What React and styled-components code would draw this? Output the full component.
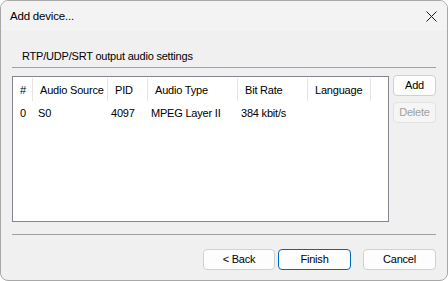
import React from 'react'
import styled, { createGlobalStyle } from 'styled-components'

const Global = createGlobalStyle`
  html, body {
    margin: 0;
    padding: 0;
    background: #ffffff;
  }
  * { box-sizing: border-box; }
`;

const Window = styled.div`
    width: 448px;
    height: 281px;
    border: 1px solid #a8a8a8;
    border-radius: 8px;
    overflow: hidden;
    background: #f0f0f0;
    font-family: "Liberation Sans", Arial, sans-serif;
    font-size: 11px;
    letter-spacing: -0.2px;
    color: #000;
    display: flex;
    flex-direction: column;
`;

const TitleBar = styled.div`
    height: 30px;
    flex: none;
    background: #f3f3f3;
    display: flex;
    align-items: center;
    justify-content: space-between;
    padding-left: 9px;
    padding-right: 10px;
    font-size: 11.5px;
`;

const Close = styled.div`
    width: 12px;
    height: 12px;
    display: flex;
    align-items: center;
    justify-content: center;
`;

const Body = styled.div`
    flex: 1;
    padding: 0 11px;
    display: flex;
    flex-direction: column;
`;

const GroupLabel = styled.div`
    margin-top: 16px;
    padding-left: 10px;
    height: 18px;
    line-height: 18px;
`;

const Rule = styled.div`
    height: 1px;
    background: #a0a0a0;
    margin-top: ${p => p.$top || 0}px;
`;

const Middle = styled.div`
    display: flex;
    align-items: flex-start;
    gap: 4px;
    margin-top: 8px;
`;

const ListBox = styled.div`
    width: 377px;
    height: 146px;
    background: #ffffff;
    border: 1px solid #828790;
`;

const cols = '20px 75px 40px 90px 70px 63px';

const HeaderRow = styled.div`
    display: grid;
    grid-template-columns: ${cols};
    height: 25px;
`;

const HeaderCell = styled.div`
    padding-left: 7px;
    display: flex;
    align-items: center;
    white-space: nowrap;
    border-right: 1px solid #e5e5e5;
    margin: 1px 0;
`;

const DataRow = styled.div`
    display: grid;
    grid-template-columns: ${cols};
    height: 20px;
    margin-top: 1px;
`;

const DataCell = styled.div`
    padding-left: ${p => p.$pad}px;
    display: flex;
    align-items: center;
    white-space: nowrap;
`;

const SideButtons = styled.div`
    display: flex;
    flex-direction: column;
    gap: 6px;
    margin-top: -1px;
`;

const Button = styled.button`
    display: block;
    margin: 0;
    width: ${p => p.$w || 43}px;
    height: 21px;
    padding: 0;
    font-family: inherit;
    font-size: 11px;
    letter-spacing: -0.2px;
    line-height: 19px;
    color: ${p => (p.disabled ? '#a0a0a0' : '#000')};
    background: ${p => (p.disabled ? '#f5f5f5' : '#fdfdfd')};
    border: 1px solid ${p => (p.$primary ? '#0067c0' : p.disabled ? '#e3e3e3' : '#d0d0d0')};
    border-radius: 4px;
`;

const Footer = styled.div`
    display: flex;
    justify-content: flex-end;
    margin-top: 14px;
    gap: 3px;
`;

const Spacer = styled.div`
    width: 6px;
`;

const headers = ['#', 'Audio Source', 'PID', 'Audio Type', 'Bit Rate', 'Language'];
const rows = [['0', 'S0', '4097', 'MPEG Layer II', '384 kbit/s', '']];
const pads = [7, 5, 3, 3, 3, 3];

export default function App() {
  return (
    <>
      <Global />
      <Window>
        <TitleBar>
          <span>Add device...</span>
          <Close>
            <svg width="11" height="11" viewBox="0 0 11 11">
              <path d="M0.5 0.5 L10.5 10.5 M10.5 0.5 L0.5 10.5" stroke="#1a1a1a" strokeWidth="1" />
            </svg>
          </Close>
        </TitleBar>
        <Body>
          <GroupLabel>RTP/UDP/SRT output audio settings</GroupLabel>
          <Rule $top={2} />
          <Middle>
            <ListBox>
              <HeaderRow>
                {headers.map(h => <HeaderCell key={h}>{h}</HeaderCell>)}
              </HeaderRow>
              {rows.map((r, i) => (
                <DataRow key={i}>
                  {r.map((c, j) => <DataCell key={j} $pad={pads[j]}>{c}</DataCell>)}
                </DataRow>
              ))}
            </ListBox>
            <SideButtons>
              <Button>Add</Button>
              <Button disabled>Delete</Button>
            </SideButtons>
          </Middle>
          <Rule $top={12} />
          <Footer>
            <Button $w={72}>&lt; Back</Button>
            <Button $w={73} $primary>Finish</Button>
            <Spacer />
            <Button $w={73}>Cancel</Button>
          </Footer>
        </Body>
      </Window>
    </>
  )
}
